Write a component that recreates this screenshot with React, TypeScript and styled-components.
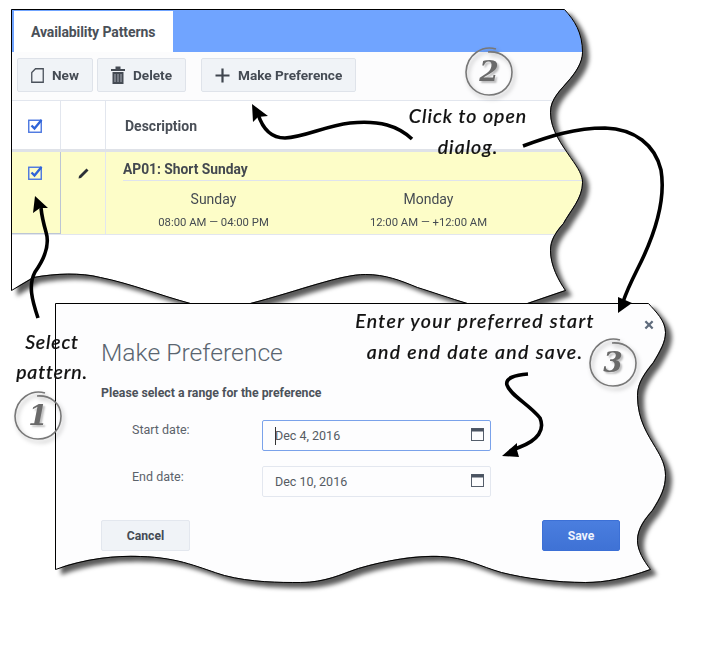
import React from "react";
import styled, { createGlobalStyle } from "styled-components";

const shift = (d: string, dx: number, dy: number) => {
  let isX = true;
  return d.replace(/-?\d+(\.\d+)?/g, (n) => {
    const v = parseFloat(n) - (isX ? dx : dy);
    isX = !isX;
    return String(v);
  });
};

const UPPER_ABS =
  "M11,9 L564,9 C574,20 582,32 582,52 C582,62 575,72 570,78 C560,90 550,98 550,112 C550,130 562,145 570,157 C578,168 582,175 582,182 C582,198 570,210 563,223 C555,232 550,240 550,250 C550,265 558,280 565,290 L527,303 C500,306 480,306 467,303 C450,298 430,291 417,287 C400,280 385,274 365,274 C340,274 300,290 250,303 C230,307 210,307 190,303 C160,295 130,283 100,277 C80,272 55,273 33,277 L11,290 Z";
const DIALOG_ABS =
  "M55,303 L648,303 C655,311 665,320 665,332 C665,342 660,350 653,362 C645,372 637,382 637,395 C637,420 648,435 655,447 C661,457 665,465 665,475 C665,488 660,497 652,510 C645,518 637,528 637,540 C637,550 643,560 650,569 C625,578 605,582 585,582 C555,582 525,578 501,572 C480,566 465,557 440,556 C415,555 385,560 358,568 C340,574 325,582 300,582 C280,582 250,582 224,575 C200,568 180,557 140,556 C115,555 85,558 55,569 Z";

const upperPath = shift(UPPER_ABS, 11, 9);
const dialogPath = shift(DIALOG_ABS, 55, 303);

const Global = createGlobalStyle`
  html, body { margin: 0; padding: 0; background: #fff; }
  body { font-family: Roboto, "Liberation Sans", sans-serif; color: #444a52; }
`;

const Canvas = styled.div`
  position: relative;
  width: 709px;
  height: 657px;
  overflow: hidden;
  background: #fff;
`;

const Window = styled.section<{ $x: number; $y: number; $w: number; $h: number }>`
  position: absolute;
  left: ${(p) => p.$x}px;
  top: ${(p) => p.$y}px;
  width: ${(p) => p.$w}px;
  height: ${(p) => p.$h}px;
  filter: drop-shadow(6px 5px 2px #5a5a5a);
`;

const UpperSheet = styled.div`
  width: 100%;
  height: 100%;
  background: #fff;
  clip-path: path("${upperPath}");
  display: flex;
  flex-direction: column;
`;

const DialogSheet = styled.div`
  width: 100%;
  height: 100%;
  background: #fdfdfe;
  clip-path: path("${dialogPath}");
  box-sizing: border-box;
  padding: 31px 0 0 46px;
  display: flex;
  flex-direction: column;
`;

const Outline = styled.svg`
  position: absolute;
  left: 0;
  top: 0;
  overflow: visible;
  pointer-events: none;
`;

const TabBar = styled.div`
  height: 43px;
  flex: none;
  background: #70a4ff;
  box-sizing: border-box;
  padding: 2px 0 0 3px;
  display: flex;
`;

const Tab = styled.div`
  width: 159px;
  background: #fff;
  box-sizing: border-box;
  padding: 13px 0 0 17px;
  font-size: 14px;
  font-weight: 700;
  letter-spacing: -0.1px;
  color: #4a5058;
`;

const Toolbar = styled.div`
  height: 49px;
  flex: none;
  box-sizing: border-box;
  padding: 6px 0 0 6px;
  background: #fcfcfd;
  border-bottom: 1px solid #e2e6ee;
  display: flex;
  gap: 4px;
`;

const ToolButton = styled.button<{ $w: number; $gapLeft?: number }>`
  width: ${(p) => p.$w}px;
  height: 34px;
  margin-left: ${(p) => p.$gapLeft ?? 0}px;
  box-sizing: border-box;
  padding: 0 0 0 13px;
  border: 1px solid #dfe3ea;
  border-radius: 2px;
  background: #f0f3f7;
  display: flex;
  align-items: center;
  gap: 8px;
  font-family: Roboto, sans-serif;
  font-size: 13.6px;
  font-weight: 700;
  color: #454b54;
`;

const HeaderRow = styled.div`
  height: 51px;
  flex: none;
  display: grid;
  grid-template-columns: 50px 45px 1fr;
  box-sizing: border-box;
  border-bottom: 3px solid #dfe2e8;
`;

const HeaderCell = styled.div<{ $line?: boolean }>`
  border-right: ${(p) => (p.$line ? "1px solid #e2e6ee" : "none")};
  display: flex;
  align-items: center;
  justify-content: center;
`;

const DescriptionCell = styled.div`
  padding: 2px 0 0 19px;
  display: flex;
  align-items: center;
  font-size: 14px;
  font-weight: 700;
  color: #4a4f57;
`;

const DataRow = styled.div`
  height: 83px;
  flex: none;
  background: #fdfdc8;
  display: grid;
  grid-template-columns: 50px 45px 1fr;
  box-sizing: border-box;
  border-bottom: 1px solid #e2e6ee;
`;

const CheckCell = styled.div`
  border-right: 1px solid #bcc5d4;
  border-bottom: 1px solid #bcc5d4;
  display: flex;
  justify-content: center;
  padding-top: 13px;
  box-sizing: border-box;
  height: 82px;
`;

const EditCell = styled.div`
  border-right: 1px solid #e2e6ee;
  display: flex;
  justify-content: center;
  padding-top: 16px;
  box-sizing: border-box;
`;

const PatternCell = styled.div`
  display: flex;
  flex-direction: column;
`;

const PatternTitle = styled.div`
  margin-left: 17px;
  height: 29px;
  box-sizing: border-box;
  padding-top: 9px;
  border-bottom: 1px solid #dfe3ee;
  font-size: 13.8px;
  font-weight: 700;
  color: #43484f;
`;

const Days = styled.div`
  display: grid;
  grid-template-columns: 215px 215px;
`;

const Day = styled.div`
  text-align: center;
  padding-top: 10px;
`;

const DayName = styled.div`
  font-size: 14px;
  line-height: 17px;
  color: #454b52;
`;

const DayHours = styled.div`
  margin-top: 7px;
  font-size: 11.3px;
  line-height: 14px;
  color: #454b52;
`;

const Dash = styled.span`
  vertical-align: 1px;
`;

const DialogTitle = styled.h1`
  margin: 1px 0 0;
  font-size: 24.7px;
  line-height: 36px;
  font-weight: 300;
  color: #5a6570;
`;

const DialogHint = styled.p`
  margin: 14px 0 0;
  font-size: 12.3px;
  line-height: 16px;
  font-weight: 700;
  color: #4c525a;
`;

const DateField = styled.div<{ $top: number }>`
  margin-top: ${(p) => p.$top}px;
  display: grid;
  grid-template-columns: 161px 229px;
  align-items: start;
`;

const FieldLabel = styled.label<{ $drop: number }>`
  padding: ${(p) => p.$drop}px 0 0 31px;
  font-size: 12.5px;
  line-height: 16px;
  color: #5b626a;
`;

const DateBox = styled.div<{ $focus?: boolean }>`
  position: relative;
  height: 31px;
  box-sizing: border-box;
  border: 1px solid ${(p) => (p.$focus ? "#7aa2ea" : "#e3e7ef")};
  border-radius: 2px;
  background: #fdfdfe;
  padding-left: 12px;
  display: flex;
  align-items: center;
  font-size: 12.5px;
  color: #555b63;
`;

const Caret = styled.span`
  position: absolute;
  left: 12px;
  top: 6px;
  width: 1px;
  height: 18px;
  background: #333;
`;

const CalIcon = styled.svg`
  position: absolute;
  right: 6px;
  top: 7px;
`;

const Actions = styled.div`
  margin-top: 23px;
  width: 519px;
  display: flex;
  justify-content: space-between;
`;

const DialogButton = styled.button<{ $primary?: boolean }>`
  width: ${(p) => (p.$primary ? 78 : 89)}px;
  height: 31px;
  padding-top: 2px;
  box-sizing: border-box;
  border-radius: 2px;
  border: 1px solid ${(p) => (p.$primary ? "#3c70d6" : "#e3e7ee")};
  background: ${(p) => (p.$primary ? "linear-gradient(#4a7edf, #3f72d5)" : "#f0f3f7")};
  color: ${(p) => (p.$primary ? "#eef3fd" : "#454b54")};
  font-family: Roboto, sans-serif;
  font-size: 12.2px;
  font-weight: 700;
`;

const CloseMark = styled.span`
  position: absolute;
  left: 589px;
  top: 12px;
  font-size: 19px;
  line-height: 20px;
  font-weight: 700;
  color: #5f6b7c;
`;

const Drawing = styled.svg`
  position: absolute;
  left: 0;
  top: 0;
  pointer-events: none;
`;

const Note = styled.div<{ $x: number; $y: number; $w: number; $lh: number; $track?: number }>`
  position: absolute;
  left: ${(p) => p.$x}px;
  top: ${(p) => p.$y}px;
  width: ${(p) => p.$w}px;
  text-align: center;
  font-family: Lato, "Noto Sans", sans-serif;
  font-style: italic;
  font-weight: 500;
  font-size: 19.5px;
  line-height: ${(p) => p.$lh}px;
  letter-spacing: ${(p) => p.$track ?? 1.25}px;
  -webkit-text-stroke: 0.2px #111;
  color: #111;
  white-space: nowrap;
`;

const Badge = styled.div<{ $x: number; $y: number }>`
  position: absolute;
  left: ${(p) => p.$x}px;
  top: ${(p) => p.$y}px;
  width: 52px;
  height: 52px;
  display: flex;
  align-items: center;
  justify-content: center;
`;

const BadgeRing = styled.svg`
  position: absolute;
  left: 0;
  top: 0;
  overflow: visible;
  filter: drop-shadow(2px 3px 2px rgba(0, 0, 0, 0.3));
`;

const BadgeDigit = styled.span`
  position: relative;
  font-family: "DejaVu Serif", "Liberation Serif", serif;
  font-style: italic;
  font-weight: 700;
  font-size: 28px;
  line-height: 52px;
  color: #6a6a6a;
  text-shadow: 2px 2px 2px rgba(0, 0, 0, 0.25);
`;

const CheckBox = () => (
  <svg width="15" height="15" viewBox="0 0 15 15" fill="none">
    <rect x="0.75" y="2.25" width="12.5" height="12" stroke="#4a76e0" strokeWidth="1.4" />
    <path d="M3.5 7.5 L6.5 10.5 L13.5 2" stroke="#2f64d8" strokeWidth="2.4" />
  </svg>
);

const Calendar = () => (
  <CalIcon width="13" height="13" viewBox="0 0 13 13" fill="none">
    <rect x="0.5" y="0.5" width="12" height="12" stroke="#555e6b" />
    <rect x="0.5" y="0.5" width="12" height="3" fill="#4a5361" />
  </CalIcon>
);

const Ring = () => (
  <BadgeRing width="52" height="52" viewBox="0 0 52 52" fill="none">
    <path
      d="M33 3 C20 -1 4 8 3 26 C3 40 14 49 26 49 C40 49 49 39 49 26 C49 14 39 5 25 6"
      stroke="#787878"
      strokeWidth="1.6"
    />
  </BadgeRing>
);

export default function App() {
  return (
    <Canvas>
      <Global />
      <Window $x={11} $y={9} $w={572} $h={298}>
        <UpperSheet>
          <TabBar>
            <Tab>Availability Patterns</Tab>
          </TabBar>
          <Toolbar>
            <ToolButton $w={76}>
              <svg width="13" height="15" viewBox="0 0 13 15" fill="none">
                <path d="M4.5 0.75 H12.25 V14.25 H0.75 V4.5 Z" stroke="#4a515b" strokeWidth="1.3" />
              </svg>
              New
            </ToolButton>
            <ToolButton $w={89}>
              <svg width="14" height="18" viewBox="0 0 14 18">
                <path d="M0 3 H14 V5 H0 Z M4.5 0.5 H9.5 V3 H4.5 Z" fill="#454b54" />
                <path d="M1.5 6 H12.5 V18 H1.5 Z" fill="#454b54" />
                <path d="M4 8 V16 M7 8 V16 M10 8 V16" stroke="#a9adb6" strokeWidth="1" />
              </svg>
              Delete
            </ToolButton>
            <ToolButton $w={155} $gapLeft={11}>
              <svg width="15" height="15" viewBox="0 0 15 15" fill="none">
                <path d="M7.5 0.5 V14.5 M0.5 7.5 H14.5" stroke="#3f454e" strokeWidth="2.2" />
              </svg>
              Make Preference
            </ToolButton>
          </Toolbar>
          <HeaderRow>
            <HeaderCell $line>
              <CheckBox />
            </HeaderCell>
            <HeaderCell $line />
            <DescriptionCell>Description</DescriptionCell>
          </HeaderRow>
          <DataRow>
            <CheckCell>
              <CheckBox />
            </CheckCell>
            <EditCell>
              <svg width="11" height="11" viewBox="0 0 11 11">
                <path d="M8.5 0.5 L10.5 2.5 L3 10 L0.5 10.5 L1 8 Z" fill="#2b2f36" />
              </svg>
            </EditCell>
            <PatternCell>
              <PatternTitle>AP01: Short Sunday</PatternTitle>
              <Days>
                <Day>
                  <DayName>Sunday</DayName>
                  <DayHours>
                    08:00 AM <Dash>—</Dash> 04:00 PM
                  </DayHours>
                </Day>
                <Day>
                  <DayName>Monday</DayName>
                  <DayHours>
                    12:00 AM <Dash>—</Dash> +12:00 AM
                  </DayHours>
                </Day>
              </Days>
            </PatternCell>
          </DataRow>
        </UpperSheet>
        <Outline width="572" height="298" fill="none">
          <path d={upperPath} stroke="#000" strokeWidth="1" transform="translate(0.5 0.5)" />
        </Outline>
      </Window>

      <Window $x={55} $y={303} $w={611} $h={280}>
        <DialogSheet>
          <DialogTitle>Make Preference</DialogTitle>
          <DialogHint>Please select a range for the preference</DialogHint>
          <DateField $top={19}>
            <FieldLabel $drop={2}>Start date:</FieldLabel>
            <DateBox $focus>
              <Caret />
              Dec 4, 2016
              <Calendar />
            </DateBox>
          </DateField>
          <DateField $top={15}>
            <FieldLabel $drop={3}>End date:</FieldLabel>
            <DateBox>
              Dec 10, 2016
              <Calendar />
            </DateBox>
          </DateField>
          <Actions>
            <DialogButton>Cancel</DialogButton>
            <DialogButton $primary>Save</DialogButton>
          </Actions>
        </DialogSheet>
        <CloseMark>×</CloseMark>
        <Outline width="611" height="280" fill="none">
          <path d={dialogPath} stroke="#000" strokeWidth="1" transform="translate(0.5 0.5)" />
        </Outline>
      </Window>

      <Drawing width="709" height="657" viewBox="0 0 709 657" fill="none">
        <g stroke="#000" strokeWidth="3.6" strokeLinecap="butt">
          <path d="M412,139 C398,126 380,120 350,123 C325,126 305,137 285,138 C272,138 263,130 258,114" />
          <path d="M523,146 C550,136 575,128 605,128 C635,129 655,145 661,170 C666,200 655,235 637,270 C632,280 627,290 623,302" />
          <path d="M38,318 C32,300 28,285 35,272 C45,258 50,245 46,232 C44,225 42,218 41,208" />
          <path d="M528,374 C515,375 505,378 507,385 C510,395 530,405 540,418 C545,430 538,440 520,447 L510,451" />
        </g>
        <g fill="#000">
          <path d="M252,104 L268,116 L258,117 L253,122 Z" />
          <path d="M618,313 L618,297 L632,303 Z" />
          <path d="M35,196 L48,208 L40,208 L33,213 Z" />
          <path d="M502,456 L517,443 L517,450 L519,457 Z" />
        </g>
      </Drawing>

      <Note $x={388} $y={100} $w={160} $lh={31} $track={1}>
        Click to open
        <br />
        dialog.
      </Note>
      <Note $x={2} $y={327} $w={100} $lh={30} $track={0.8}>
        Select
        <br />
        pattern.
      </Note>
      <Note $x={345} $y={305} $w={260} $lh={31} $track={1.35}>
        Enter your preferred start
        <br />
        and end date and save.
      </Note>

      <Badge $x={12} $y={390}>
        <Ring />
        <BadgeDigit>1</BadgeDigit>
      </Badge>
      <Badge $x={463} $y={46}>
        <Ring />
        <BadgeDigit>2</BadgeDigit>
      </Badge>
      <Badge $x={587} $y={337}>
        <Ring />
        <BadgeDigit>3</BadgeDigit>
      </Badge>
    </Canvas>
  );
}
